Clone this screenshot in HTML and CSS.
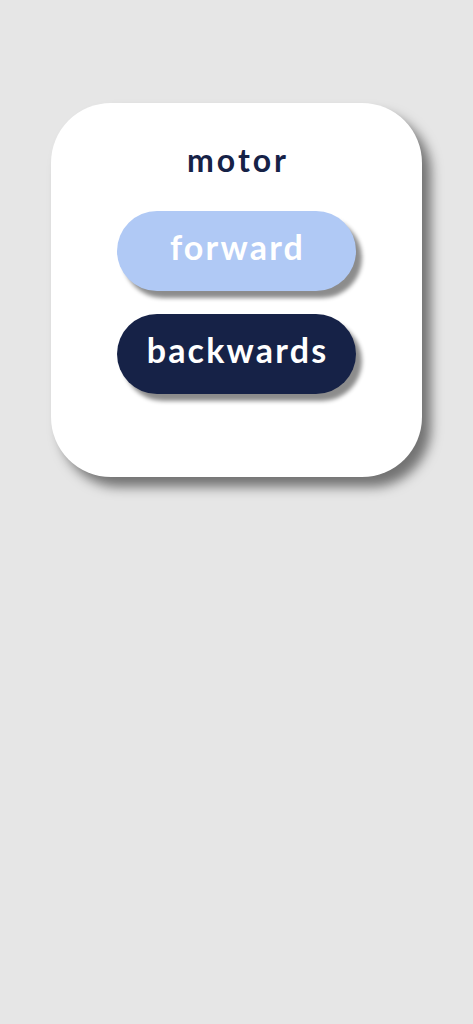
FILE: index.html
```html
<!DOCTYPE html>
<html>
<head>
<meta charset="utf-8">
<link rel="stylesheet" href="styles.css">
</head>
<body>
<div class="card">
  <div class="title">motor</div>
  <div class="buttons">
    <div class="btn btn-light">forward</div>
    <div class="btn btn-dark">backwards</div>
  </div>
</div>
</body>
</html>
```
FILE: styles.css
```css
html, body {
  margin: 0;
  padding: 0;
  background: #e6e6e6;
  height: 100%;
}
body {
  font-family: Lato, "Open Sans", sans-serif;
  padding: 103px 0 0 51px;
  box-sizing: border-box;
}
.card {
  width: 371px;
  height: 374px;
  background: #ffffff;
  border-radius: 60px;
  box-shadow: 9px 10px 12px rgba(0, 0, 0, 0.5);
  display: flex;
  flex-direction: column;
  align-items: center;
  box-sizing: border-box;
  padding-top: 39px;
}
.title {
  font-weight: 700;
  font-size: 32px;
  line-height: 36px;
  letter-spacing: 3px;
  padding-left: 3px;
  color: #162247;
  height: 36px;
}
.buttons {
  margin-top: 33px;
  display: flex;
  flex-direction: column;
  gap: 23px;
}
.btn {
  width: 239px;
  height: 80px;
  border-radius: 40px;
  display: flex;
  align-items: center;
  justify-content: center;
  box-sizing: border-box;
  padding: 0 0 10px 2px;
  font-weight: 700;
  font-size: 34px;
  letter-spacing: 2.2px;
  color: #ffffff;
  box-shadow: 6px 7px 4px rgba(0, 0, 0, 0.45);
}
.btn-light {
  background: #b0c9f5;
}
.btn-dark {
  background: #162247;
}
```
